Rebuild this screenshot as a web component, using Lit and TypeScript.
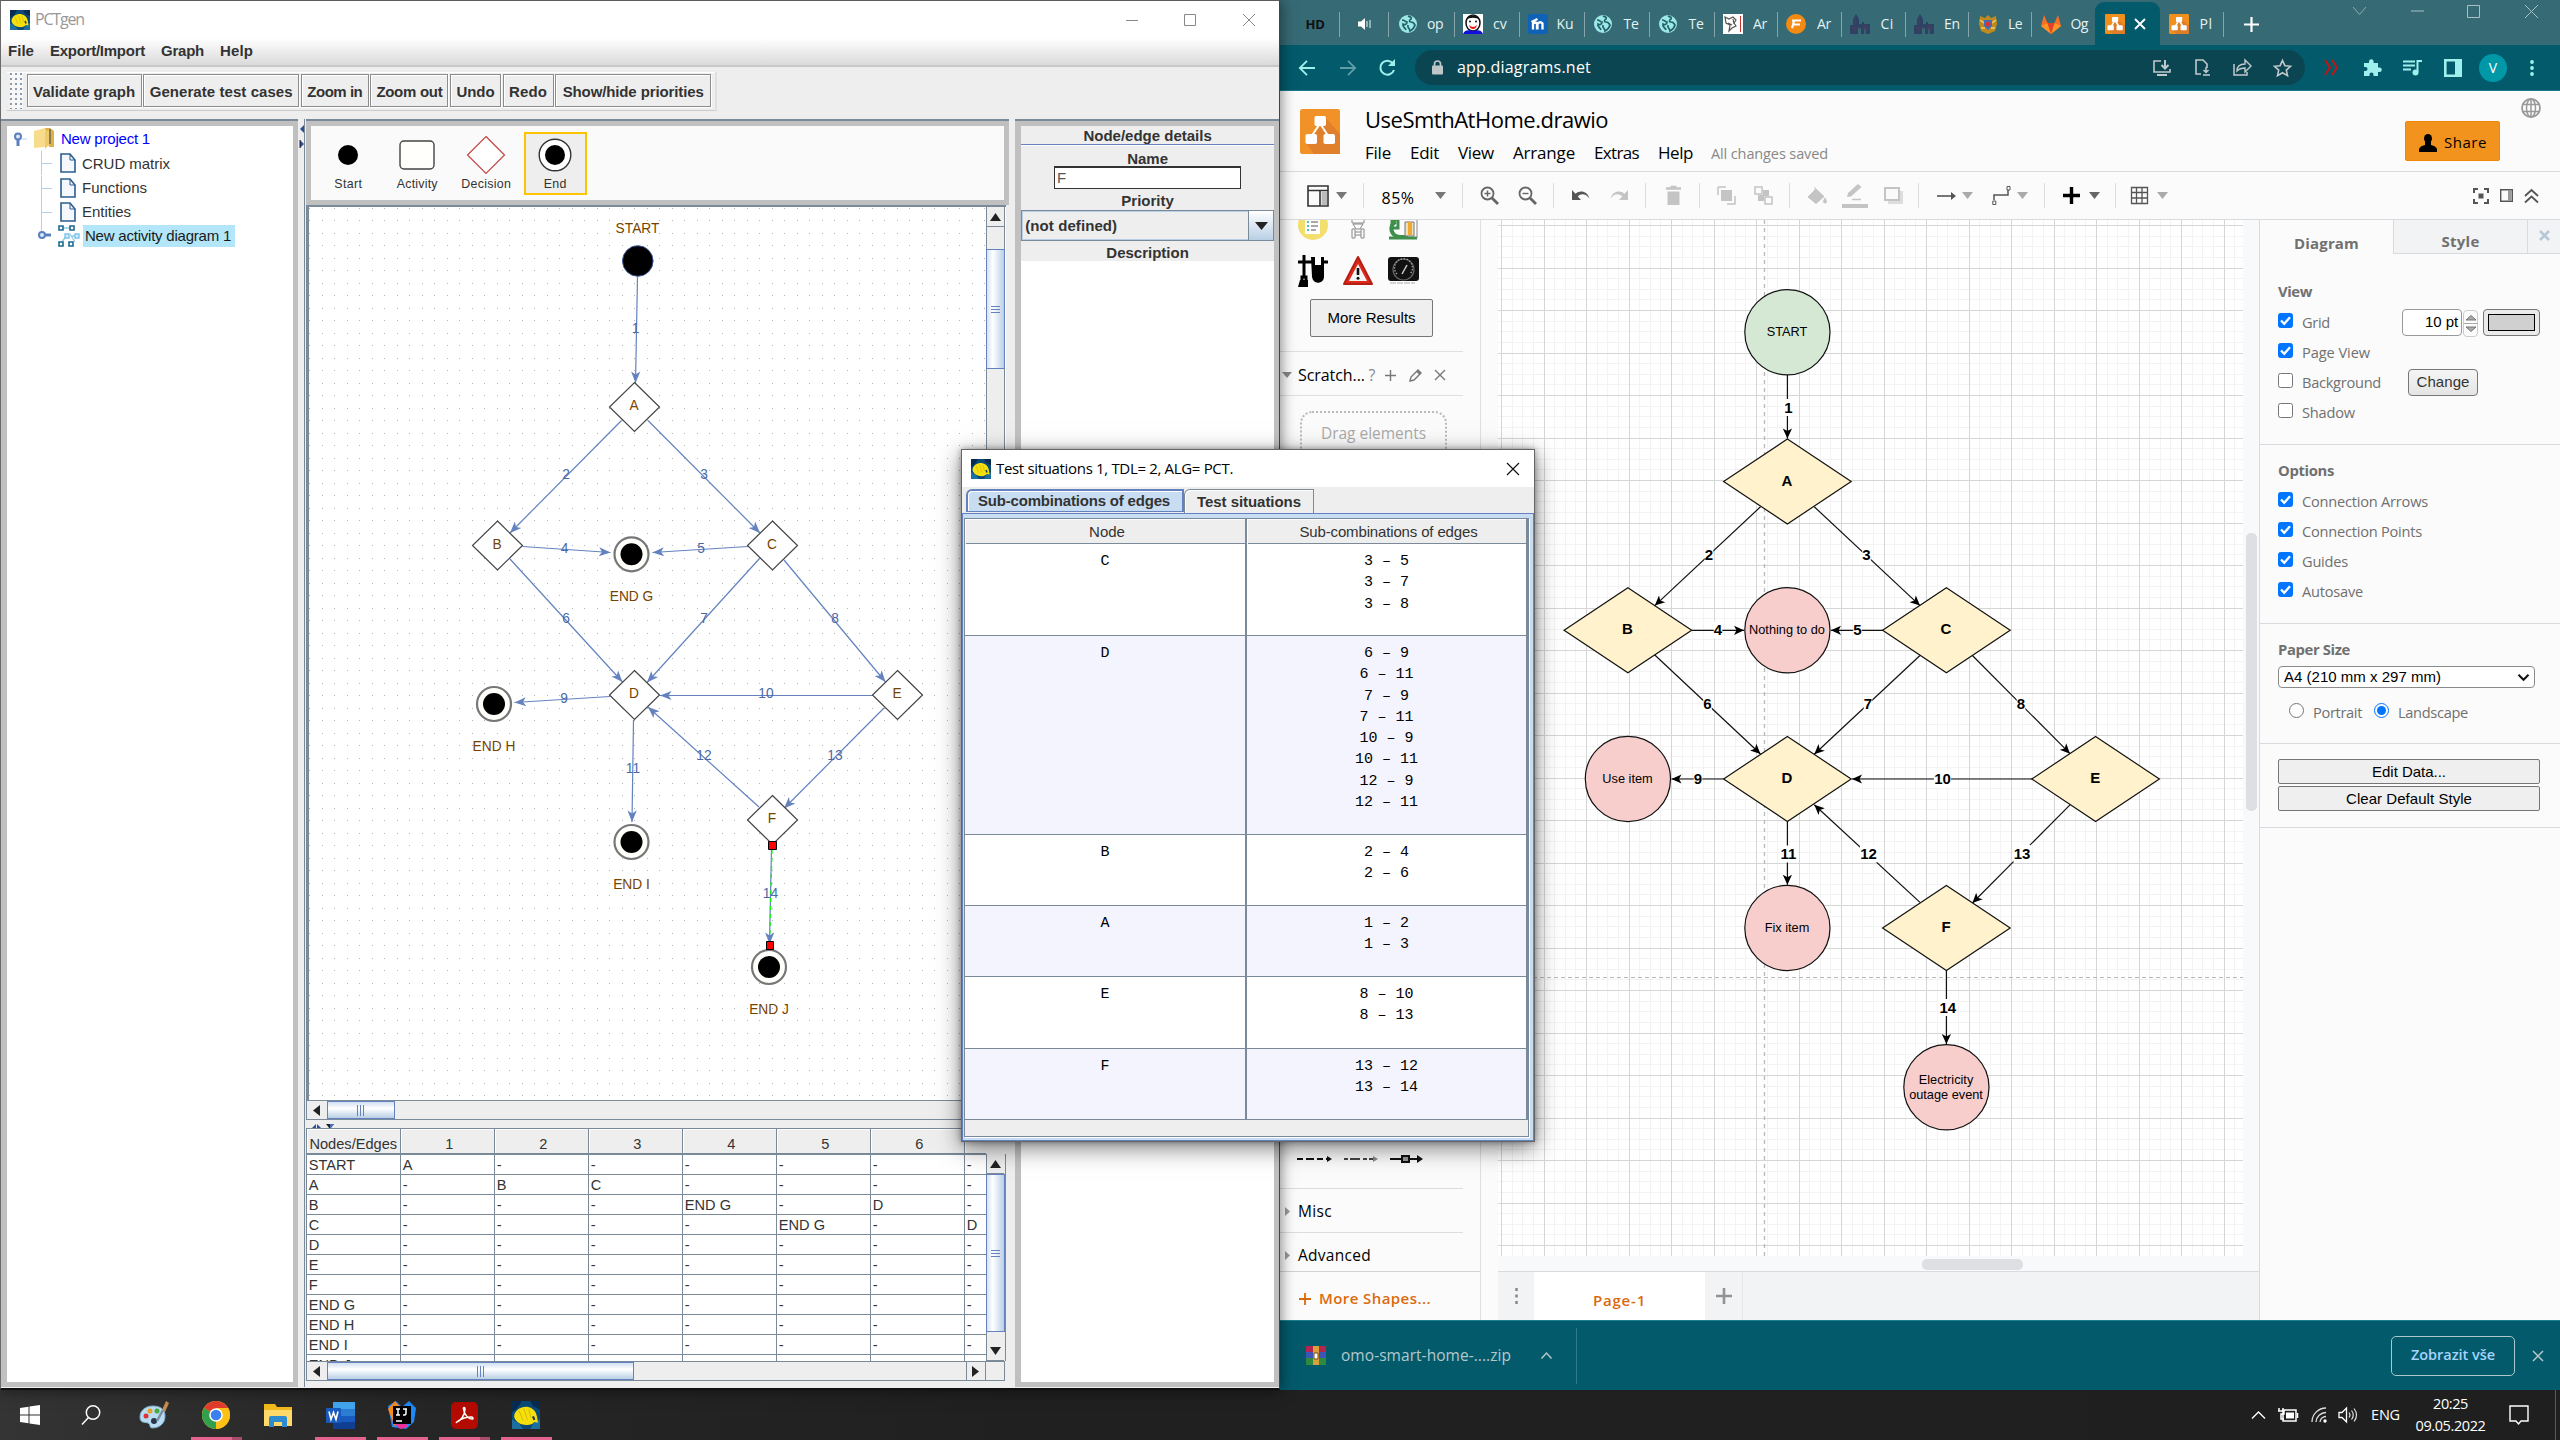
import { LitElement, html, svg, css, nothing } from "lit";
import { customElement, property } from "lit/decorators.js";

const base = css`
  :host { display: block; box-sizing: border-box; }
  * { box-sizing: border-box; }
  svg { display: block; flex: none; overflow: visible; }
  .row { display: flex; align-items: center; }
  .col { display: flex; flex-direction: column; }
  .grow { flex: 1; min-width: 0; min-height: 0; }
`;

/* A one-line label set to a fixed measure by tracking. */
@customElement("text-run")
export class TextRun extends LitElement {
  @property({ type: Number }) w = 0;
  static styles = css`
    :host { display: inline-block; white-space: pre; line-height: 1.3; flex: none; }
    .run { display: inline-block; white-space: pre; }
  `;
  render() {
    return html`<span class="run"><slot></slot></span>`;
  }
  firstUpdated() {
    const run = this.renderRoot.querySelector(".run") as HTMLElement;
    const count = (this.textContent ?? "").length;
    if (this.w && count) {
      const natural = run.getBoundingClientRect().width;
      run.style.letterSpacing = (this.w - natural) / count + "px";
    }
  }
}

const run = (text: string, w = 0) => html`<text-run .w=${w}>${text}</text-run>`;

type Item = [center: number, width: number, content: unknown];

/* Lays items out in a row, each centred on its own stop. */
const strip = (start: number, items: Item[]) => {
  let end = start;
  return items.map(([c, w, content]) => {
    const gap = c - w / 2 - end;
    end = c + w / 2;
    return html`<span class="stop" style="width:${w}px;margin-left:${gap}px">${content}</span>`;
  });
};

const icon = (w: number, h: number, content: unknown, box = `0 0 ${w} ${h}`) =>
  html`<svg width=${w} height=${h} viewBox=${box} fill="none">${content}</svg>`;

const fish = (s: number) =>
  icon(s, s, svg`
    <rect width="20" height="20" fill="#0b4a78"/>
    <path d="M0 0h7l-3 5-4 3zM13 0h7v6l-5-2z" fill="#072c52"/>
    <path d="M0 13l5 3 3 4H0zM16 15l4-2v7h-7z" fill="#1c6f9e"/>
    <path d="M1.500 11C2 6 7 3.500 11.500 4.200c4 .8 6 3.800 6.500 7.800l.5 3.500-2.500-.5c-1 1.500-4 2.500-7 2C5 16.500 2 14 1.500 11z" fill="#f5e00c"/>
    <path d="M5 7l3 7M8.500 5.500l2.500 8M12 6l1.500 6" stroke="#d2b808" stroke-width=".7"/>
    <path d="M15 11l1 2.500" stroke="#24345a" stroke-width="1.500"/>`, "0 0 20 20");

const arrowHead = (x1: number, y1: number, x2: number, y2: number, len: number, half: number, notch: number) => {
  const a = Math.atan2(y2 - y1, x2 - x1);
  const p = (d: number, s: number) =>
    `${(x2 - d * Math.cos(a) - s * Math.sin(a)).toFixed(2)} ${(y2 - d * Math.sin(a) + s * Math.cos(a)).toFixed(2)}`;
  return `M${p(0, 0)}L${p(len, half)}L${p(notch, 0)}L${p(len, -half)}Z`;
};

type Edge = [string, number, number, number, number, number, number];

const activityEdges: Edge[] = [
  ["1", 637.5, 277, 635.5, 383, 635.5, 328],
  ["2", 621.5, 420.5, 510, 533, 566, 474],
  ["3", 648, 420.5, 760, 533, 704, 474],
  ["4", 522.5, 546.5, 610.5, 552.5, 564.5, 548],
  ["5", 748, 546.5, 652.5, 552.5, 701, 548],
  ["6", 510, 559, 622.5, 682, 566, 618],
  ["7", 759.5, 558.5, 647, 682.5, 704, 618],
  ["8", 784, 560, 885.5, 682, 835, 618],
  ["9", 610, 696.5, 514.5, 702.5, 564, 698],
  ["10", 873, 695.5, 660, 695.5, 766, 693],
  ["11", 633.5, 720, 632, 822, 633, 768],
  ["12", 759, 807, 648, 707, 704, 755],
  ["13", 884, 708, 784, 808.5, 835, 755],
  ["14", 771.5, 848, 769.5, 944, 770.5, 893],
];

const diamonds: [string, number, number][] = [
  ["A", 634.5, 407], ["B", 497.5, 545.5], ["C", 772.5, 545.5],
  ["D", 634.5, 695], ["E", 897.5, 695], ["F", 772.5, 820],
];

const ends: [string, number, number, number][] = [
  ["END G", 631.5, 554.3, 596], ["END H", 494, 704, 746],
  ["END I", 631.5, 842, 884], ["END J", 769, 967, 1009],
];

const dotGrid = () => {
  let d = "";
  for (let j = 0; j < 72; j++)
    for (let i = 0; i < 55; i++) {
      const x = Math.round(309.4 + i * 12.5), y = Math.round(207.6 + j * 12.5);
      if (x < 986) d += `M${x} ${y + 0.5}h1`;
    }
  return d;
};

const columns = ["1", "2", "3", "4", "5", "6"];
const matrix: [string, Record<number, string>][] = [
  ["START", { 0: "A" }], ["A", { 1: "B", 2: "C" }], ["B", { 3: "END G", 5: "D" }],
  ["C", { 4: "END G", 6: "D" }], ["D", {}], ["E", {}], ["F", {}],
  ["END G", {}], ["END H", {}], ["END I", {}], ["END J", {}],
];

const tri = {
  up: "M0 8L5.5 0L11 8Z", down: "M0 0L5.5 8L11 0Z",
  left: "M7 0V11L0 5.5Z", right: "M0 0V11L7 5.5Z",
};

@customElement("pct-window")
export class PctWindow extends LitElement {
  static styles = [base, css`
    :host {
      width: 1280px; height: 1390px; background: #eee; color: #333; font: 15px "Liberation Sans", sans-serif;
      border-top: 1px solid #5c5c5c; border-left: 1px solid #6a6a6a; border-right: 1px solid #444;
      border-bottom: 2px solid #111; box-shadow: 0 0 14px rgba(0,0,0,.55); overflow: hidden;
    }
    .wrap { height: 1387px; }
    .stop { display: flex; justify-content: center; flex: none; }
    .title { height: 37px; background: #fff; color: #999; font: 16px "Open Sans", sans-serif; padding-left: 9px; gap: 5px; }
    .menu { height: 29px; background: linear-gradient(#fff, #dadada); border-bottom: 2px solid #c8c8c8; padding: 0 0 1px 7px; gap: 16px; font-weight: bold; }
    .tools { height: 52px; padding: 5px 0 0 6px; }
    .bar { width: 710px; height: 39px; border-bottom: 1px solid #ccc; border-right: 2px solid #e0e0e0; box-shadow: inset 0 1px #fff; padding-left: 3px; gap: 1.6px; font-weight: bold; }
    .grip { width: 13px; height: 36px; margin-right: 2px; background: radial-gradient(circle at 1px 1px, #8a9bb0 0.9px, transparent 1px) 0 0/5px 5px #f7f7f7; }
    .btn { height: 33px; border: 1px solid #8c8c8c; box-shadow: inset 1px 1px #fff, 1px 1px #fff; display: flex; align-items: center; justify-content: center; padding-top: 2px; margin-bottom: 1px; }
    .main { display: flex; height: 1268px; align-items: stretch; }
    .tree { width: 297px; background: #fff; border: 5px solid #c0c0c0; border-left-width: 6px; box-shadow: 0 -2px #7a8a99; margin-top: 2px; padding-top: 1px; }
    .node { display: flex; align-items: center; height: 24.3px; }
    .node.last { height: 23.500px; }
    .link { color: #00f; margin-left: 7px; }
    .leaf { margin-left: 6px; }
    .picked { background: #b3e6f8; height: 22px; width: 152px; padding-left: 2px; margin-left: 3px; display: flex; align-items: center; color: #1a1a1a; }
    .split { width: 7px; padding: 6px 0 0 2px; background: #eee; border-right: 1px solid #7a8a99; }
    .center { width: 704px; margin-left: 1px; }
    .palette { height: 86px; background: #fafafa; border: 5px solid #c0c0c0; border-top-width: 7px; border-image: linear-gradient(#7a8a99 2px, #c0c0c0 2px) 7 5 5 5; display: flex; align-items: flex-start; padding: 6px 0 0 6px; font-size: 12.4px; }
    .tool { width: 63px; height: 63px; margin-right: 6px; display: flex; flex-direction: column; align-items: center; border: 2px solid transparent; }
    .tool .pic { height: 42px; display: flex; align-items: center; }
    .tool.on { border-color: #ffc400; background: #eee; }
    .board { display: flex; height: 895px; border-top: 2px solid #7a8a99; border-left: 3px solid #7a8a99; background: #fff; width: 700px; }
    .vbar { width: 19px; background: #eee; border-left: 1px solid #7a8a99; border-right: 1px solid #7a8a99; display: flex; flex-direction: column; align-items: center; }
    .hbar { height: 20px; background: #eee; border: 1px solid #7a8a99; display: flex; }
    .cap { background: #eee; display: flex; align-items: center; justify-content: center; flex: none; }
    .vbar .cap { width: 17px; height: 20px; border-bottom: 1px solid #7a8a99; }
    .hbar .cap { width: 20px; }
    .hbar .cap.last { width: 19px; border-left: 1px solid #7a8a99; }
    .vthumb { width: 19px; border: 1px solid #6382bf; background: linear-gradient(90deg, #d5e3f2, #fff 35%, #b8cfe5); display: flex; align-items: center; justify-content: center; flex: none; }
    .hthumb { border: 1px solid #6382bf; background: linear-gradient(#d0dff0, #fff 40%, #b8cfe5); display: flex; align-items: center; justify-content: center; flex: none; }
    .hsplit { height: 9px; padding: 4px 0 0 6px; border-bottom: 1px solid #7a8a99; background: #eee; overflow: hidden; }
    .lower { display: flex; height: 232px; }
    .table { width: 680px; overflow: hidden; border-left: 1px solid #7a8a99; background: #fff; }
    .tr { display: grid; grid-template-columns: repeat(8, 94px); height: 20px; }
    .tr > span { border-right: 1px solid #7a8a99; border-bottom: 1px solid #7a8a99; padding: 1px 0 0 2px; line-height: 18px; overflow: hidden; white-space: nowrap; font-size: 14.6px; }
    .tr.head { height: 26px; }
    .tr.head > span { background: #eee; text-align: center; line-height: 30px; padding: 0 0 0 4px; border-bottom-width: 2px; box-shadow: inset 1px 1px #fff; }
    .vbar.low { width: 20px; margin-top: 25px; height: 207px; }
    .details { width: 264px; margin-left: 6px; border: 5px solid #c0c0c0; border-left: 6px solid #c0c0c0; border-top-width: 7px; border-image: linear-gradient(#7a8a99 2px, #c0c0c0 2px) 7 5 5 6; background: #fff; font-weight: bold; text-align: center; }
    .details .bg { background: #eee; }
    .field { width: 187px; height: 23px; margin: 0 auto; background: #fff; border: 1px solid #333; border-top-width: 2px; text-align: left; font-weight: normal; padding-left: 2px; line-height: 20px; color: #555; }
    .combo { height: 31px; border: 1px solid #7a8a99; box-shadow: inset 0 0 0 1px #b8cfe5; display: flex; align-items: center; text-align: left; padding-left: 3px; }
    .combo .drop { width: 25px; height: 29px; border-left: 1px solid #7a8a99; background: linear-gradient(#fff, #b8cfe5); display: flex; align-items: center; justify-content: center; }
    svg text { font: 13.75px "Liberation Sans", sans-serif; text-anchor: middle; }
  `];

  private splitArrows() {
    return icon(4, 24, svg`<path d="M4 0L0 4L4 8Z" fill="#2f4f93"/><path d="M0 15l4 4l-4 4z" fill="#2f4f93"/><path d="M0 15v8" stroke="#222"/>`);
  }

  private board() {
    return html`<svg width="677" height="893" viewBox="309 207 677 893" fill="none">
      <path d=${dotGrid()} stroke="#b4b4b4"/>
      ${activityEdges.map(([, x1, y1, x2, y2]) => svg`
        <path d="M${x1} ${y1}L${x2} ${y2}" stroke="#6382bf" stroke-width="1.2"/>
        <path d=${arrowHead(x1, y1, x2, y2, 11.5, 4.6, 8.5)} fill="#6382bf"/>`)}
      <path d="M772 850L769.7 938" stroke="#0f0" stroke-width="1.3" stroke-dasharray="4 4"/>
      ${activityEdges.map(([n, , , , , x, y]) => svg`<text x=${x} y=${y + 5} fill="#4a69a5">${n}</text>`)}
      <text x="637.5" y="233" fill="#774400">START</text>
      <circle cx="637.8" cy="261" r="15.3" fill="#000" stroke="#3c5a9a"/>
      ${diamonds.map(([n, x, y]) => svg`
        <path d="M${x} ${y - 24.5}L${x + 25} ${y}L${x} ${y + 24.5}L${x - 25} ${y}Z" fill="#fff" stroke="#444" stroke-width="1.2"/>
        <text x=${x - 0.5} y=${y + 3} fill="#774400">${n}</text>`)}
      ${ends.map(([n, x, y, ly]) => svg`
        <circle cx=${x} cy=${y} r="17" fill="#fffffb" stroke="#777" stroke-width="2.2"/>
        <circle cx=${x} cy=${y} r="11" fill="#000"/>
        <text x=${x} y=${ly + 5} fill="#774400">${n}</text>`)}
      <path d="M768.5 841.5h8v8h-8zM766.5 941.5h7v8h-7z" fill="#f00" stroke="#000"/>
    </svg>`;
  }

  private branch() {
    return icon(53, 24, svg`<path d="M34.5 0V24M34.5 12.5H45" stroke="#b8cfe5"/>`);
  }
  private leaf(label: string, w: number) {
    return html`<div class="node">${this.branch()}${icon(16, 20, svg`<path d="M1 1h9l5 6v12H1z" fill="#f4f8fc" stroke="#2b5d8f" stroke-width="1.6"/><path d="M10 1v6h5" stroke="#2b5d8f"/>`)}<span class="leaf">${run(label, w)}</span></div>`;
  }

  render() {
    const vgrip = icon(9, 7, svg`<path d="M0 .5h9M0 3.5h9M0 6.5h9" stroke="#6382bf"/>`);
    const hgrip = icon(7, 11, svg`<path d="M.5 0v11M3.5 0v11M6.5 0v11" stroke="#6382bf"/>`);
    const buttons: [string, number, number][] = [
      ["Validate graph", 115, 102], ["Generate test cases", 156, 143], ["Zoom in", 68, 55],
      ["Zoom out", 78, 66], ["Undo", 51, 38], ["Redo", 51, 38], ["Show/hide priorities", 156, 141],
    ];
    return html`<div class="wrap col">
      <div class="title row">${fish(20)}${run("PCTgen", 49)}
        <span class="row">${strip(89, [
          [1132, 12, icon(12, 12, svg`<path d="M0 6.5h12" stroke="#888"/>`)],
          [1190, 12, icon(12, 12, svg`<path d="M.5 .5h11v11H.5z" stroke="#888"/>`)],
          [1249, 12, icon(12, 12, svg`<path d="M0 0l12 12M12 0L0 12" stroke="#888"/>`)],
        ])}</span>
      </div>
      <div class="menu row">${run("File", 26)}${run("Export/Import", 95)}${run("Graph", 43)}${run("Help", 33)}</div>
      <div class="tools"><div class="bar row"><span class="grip"></span>
        ${buttons.map(([t, w, tw]) => html`<span class="btn" style="width:${w}px">${run(t, tw)}</span>`)}
      </div></div>
      <div class="main">
        <div class="tree">
          <div class="node">${icon(27, 24, svg`<path d="M15 12h5" stroke="#b8cfe5"/><circle cx="11" cy="9.5" r="3" fill="#dce8f6" stroke="#5a7fbf" stroke-width="2"/><path d="M11 12v7" stroke="#5a7fbf" stroke-width="3"/>`)}
            ${icon(20, 22, svg`<path d="M0 3l11-3v19L0 20z" fill="#f7dc8c"/><path d="M11 0h5l4 3v16h-5z" fill="#e0b04c"/><path d="M11 3l5-1v14l-5 5z" fill="#f0cb6c"/><path d="M16 1v15" stroke="#8b7a4a" stroke-width="2"/>`)}
            <span class="link">${run("New project 1", 89)}</span></div>
          ${this.leaf("CRUD matrix", 88)}${this.leaf("Functions", 65)}${this.leaf("Entities", 49)}
          <div class="node last">${icon(51, 23, svg`<path d="M34.5 0V10M38 11.500h5" stroke="#b8cfe5"/><circle cx="35" cy="11" r="3" fill="#dce8f6" stroke="#5a7fbf" stroke-width="2"/><path d="M37 11h7" stroke="#5a7fbf" stroke-width="3"/>`)}
            ${icon(22, 22, svg`<path d="M4 3h10M10 9l-7 9M12 9l5 8M14 11h4" stroke="#8ccbe8" stroke-width="1.3"/><path d="M1 1h4v4H1zM12 1h4v4h-4zM1 17h4v4H1zM11 17h4v4h-4z" stroke="#1d6b8f" stroke-width="1.6" fill="#fff"/><path d="M7 9h4v4H7zM17 9h4v4h-4z" stroke="#7cc4ea" stroke-width="1.4" fill="#d8f0fb"/>`)}
            <span class="picked">${run("New activity diagram 1", 146)}</span></div>
        </div>
        <div class="split">${this.splitArrows()}</div>
        <div class="center col">
          <div class="palette">
            <span class="tool">
              <span class="pic">${icon(20, 20, svg`<circle cx="10" cy="10" r="10" fill="#000"/>`)}</span>${run("Start", 28)}</span>
            <span class="tool"><span class="pic">${icon(36, 30, svg`<rect x="1" y="1" width="34" height="28" rx="4" fill="#fffffb" stroke="#444" stroke-width="1.4"/>`)}</span>${run("Activity", 41)}</span>
            <span class="tool"><span class="pic">${icon(38, 38, svg`<path d="M19 .5L37.5 19L19 37.5L.5 19Z" fill="#fff" stroke="#c24545" stroke-width="1.2"/>`)}</span>${run("Decision", 50)}</span>
            <span class="tool on"><span class="pic">${icon(34, 34, svg`<circle cx="17" cy="17" r="15.8" fill="#fff" stroke="#333" stroke-width="1.4"/><circle cx="17" cy="17" r="10" fill="#000"/>`)}</span>${run("End", 23)}</span>
          </div>
          <div class="board">${this.board()}
            <div class="vbar"><span class="cap">${icon(11, 8, svg`<path d=${tri.up} fill="#222"/>`)}</span>
              <span class="vthumb" style="height:120px;margin-top:22px">${vgrip}</span></div>
          </div>
          <div class="hbar"><span class="cap">${icon(7, 11, svg`<path d=${tri.left} fill="#222"/>`)}</span><span class="hthumb" style="width:68px">${hgrip}</span></div>
          <div class="hsplit">${icon(24, 5, svg`<path d="M0 4l4-4v4zM5 0l4 4H5z" fill="#2f4f93"/><path d="M14 0h8l-4 5z" fill="#222"/><path d="M18 0h4l-4 5z" fill="#4b6fbf"/>`)}</div>
          <div class="lower">
            <div class="table">
              <div class="tr head"><span style="padding:0">Nodes/Edges</span>${columns.map((c) => html`<span>${c}</span>`)}<span></span></div>
              ${matrix.map(([name, cells]) => html`<div class="tr"><span>${name}</span>${[0, 1, 2, 3, 4, 5, 6].map((i) => html`<span>${cells[i] ?? "-"}</span>`)}</div>`)}
            </div>
            <div class="vbar low"><span class="cap">${icon(11, 8, svg`<path d=${tri.up} fill="#222"/>`)}</span>
              <span class="vthumb" style="height:158px">${vgrip}</span>
              <span class="grow"></span>
              <span class="cap">${icon(11, 8, svg`<path d=${tri.down} fill="#222"/>`)}</span></div>
          </div>
          <div class="hbar" style="width:699px"><span class="cap">${icon(7, 11, svg`<path d=${tri.left} fill="#222"/>`)}</span><span class="hthumb" style="width:307px">${hgrip}</span><span class="grow"></span><span class="cap last">${icon(7, 11, svg`<path d=${tri.right} fill="#222"/>`)}</span><span style="width:19px;border-left:1px solid #7a8a99"></span></div>
        </div>
        <div class="details">
          <div class="bg col">
            <div style="height:19px;line-height:20px;border-bottom:1px solid #6382bf">Node/edge details</div>
            <div style="height:21px;line-height:25px;border-top:1px solid #fff">Name</div>
            <div class="field">F</div>
            <div style="height:21px;line-height:23px">Priority</div>
            <div class="combo"><span class="grow">${run("(not defined)", 92)}</span><span class="drop">${icon(13, 8, svg`<path d="M0 0h13L6.5 8z" fill="#222"/>`)}</span></div>
            <div style="height:20px;line-height:24px">Description</div>
          </div>
        </div>
      </div>
    </div>`;
  }
}

const situations: [string, string[]][] = [
  ["C", ["3 – 5", "3 – 7", "3 – 8"]],
  ["D", ["6 – 9", "6 – 11", "7 – 9", "7 – 11", "10 – 9", "10 – 11", "12 – 9", "12 – 11"]],
  ["B", ["2 – 4", "2 – 6"]],
  ["A", ["1 – 2", "1 – 3"]],
  ["E", ["8 – 10", "8 – 13"]],
  ["F", ["13 – 12", "13 – 14"]],
];

@customElement("situations-dialog")
export class SituationsDialog extends LitElement {
  static styles = [base, css`
    :host { width: 574px; height: 693px; border: 1px solid #666; background: #eee; color: #333; font: 15px "Liberation Sans", sans-serif; box-shadow: 0 6px 22px rgba(0,0,0,.5), 0 0 6px rgba(0,0,0,.35); }
    .title { height: 37px; background: #fff; color: #000; font: 15px "Open Sans", sans-serif; padding: 0 15px 0 9px; gap: 5px; }
    .tabs { display: flex; height: 26px; align-items: flex-end; padding-left: 4px; font-weight: bold; }
    .tab { height: 24px; display: flex; align-items: center; justify-content: center; border: 1px solid #7a8a99; border-bottom: 0; border-top-left-radius: 6px; box-shadow: inset 1px 1px #fff; }
    .tab.on { background: #c8ddf2; border: 2px solid #6382bf; border-bottom-width: 1px; height: 23px; margin-bottom: 1px; padding-right: 2px; }
    .body { height: 628px; border: 1px solid #6382bf; background: #c8ddf2; padding: 4px 4px 4px 1px; }
    .sheet { height: 619px; border: 1px solid #7a8a99; background: #eee; box-shadow: 1px 1px #fff; }
    .tr { display: grid; grid-template-columns: 282px 1fr; border-bottom: 1px solid #7a8a99; background: #fff; text-align: center; }
    .tr:nth-child(odd) { background: #f4f4ff; }
    .tr > span { font: 15px/21.25px "Liberation Mono", monospace; color: #000; padding-top: 7px; white-space: pre-line; border-right: 2px solid #7a8a99; }
    .tr.head { height: 25px; background: #eee; }
    .tr.head > span { font: 15px/25px "Liberation Sans", sans-serif; color: #333; padding: 0 0 0 4px; box-shadow: inset 1px 1px #fff; }
  `];
  render() {
    const heights = [92, 199, 71, 71, 72, 71];
    return html`
      <div class="title row">${fish(20)}${run("Test situations 1, TDL= 2, ALG= PCT.", 237)}<span class="grow"></span>
        ${icon(12, 12, svg`<path d="M0 0l12 12M12 0L0 12" stroke="#111" stroke-width="1.2"/>`)}</div>
      <div class="tabs"><span class="tab on" style="width:218px">${run("Sub-combinations of edges", 192)}</span><span class="tab" style="width:130px">${run("Test situations", 104)}</span></div>
      <div class="body"><div class="sheet">
        <div class="tr head"><span>Node</span><span>${run("Sub-combinations of edges", 178)}</span></div>
        ${situations.map(([n, lines], i) => html`<div class="tr" style="height:${heights[i]}px"><span>${n}</span><span>${lines.join("\n")}</span></div>`)}
      </div></div>`;
  }
}

/* drawio diagram */
type Shape = ["circle" | "rhombus", number, number, string, string[]];
const shapes: Shape[] = [
  ["circle", 1787.4, 332.3, "#d5e8d4", ["START"]],
  ["rhombus", 1787.4, 481.5, "#fff2cc", ["A"]],
  ["rhombus", 1627.9, 630.3, "#fff2cc", ["B"]],
  ["circle", 1787.4, 630.3, "#f8cecc", ["Nothing to do"]],
  ["rhombus", 1946.4, 630.3, "#fff2cc", ["C"]],
  ["circle", 1627.9, 779, "#f8cecc", ["Use item"]],
  ["rhombus", 1787.4, 779, "#fff2cc", ["D"]],
  ["rhombus", 2095.6, 779, "#fff2cc", ["E"]],
  ["circle", 1787.4, 928, "#f8cecc", ["Fix item"]],
  ["rhombus", 1946.4, 928, "#fff2cc", ["F"]],
  ["circle", 1946.4, 1087.2, "#f8cecc", ["Electricity", "outage event"]],
];
const flowEdges: Edge[] = [
  ["1", 1787.4, 375, 1787.4, 438.5, 1788.4, 407.5],
  ["2", 1760.5, 506.8, 1654.8, 605.6, 1709, 555],
  ["3", 1814.3, 506.8, 1920, 605.6, 1866.5, 555],
  ["4", 1692, 630.3, 1744, 630.3, 1718, 630],
  ["5", 1883, 630.3, 1831, 630.3, 1857.5, 630],
  ["6", 1654.8, 655, 1760.5, 754, 1707.5, 704],
  ["7", 1920, 655.5, 1814.3, 754.3, 1868, 704],
  ["8", 1972.4, 655.5, 2070, 753.7, 2021, 704],
  ["9", 1723.5, 779, 1671.5, 779, 1698, 779],
  ["10", 2032, 779, 1852, 779, 1942.5, 779],
  ["11", 1787.4, 821.5, 1787.4, 884.8, 1788.4, 854],
  ["12", 1920, 902.4, 1814.3, 804.8, 1868.5, 854],
  ["13", 2070, 804.8, 1972.4, 903, 2022, 853.5],
  ["14", 1946.4, 970.5, 1946.4, 1044, 1947.8, 1007.5],
];
const gridLines = (major: boolean) => {
  let d = "";
  for (let i = -1; i < 98; i++) {
    if ((((i % 4) + 4) % 4 === 0) !== major) continue;
    const x = Math.floor(1501.5 + i * 10.625), y = Math.floor(225.5 + i * 10.625);
    if (x > 1498 && x < 2243) d += `M${x + 0.5} 220V1256`;
    if (y > 219 && y < 1256) d += `M1498 ${y + 0.5}H2243`;
  }
  return d;
};

const drawioLogo = (w: number, h: number) => icon(w, h, svg`
  <rect width="40" height="40" rx="2.5" fill="#f08f1c"/>
  <path d="M24 8L40 24V40H15L7 31L20 14Z" fill="#df7d28"/>
  <path d="M19 14L11 27M21 14L29 27" stroke="#fff" stroke-width="3"/>
  <rect x="14" y="6" width="12.500" height="10" rx="1.500" fill="#fff"/>
  <rect x="5" y="22.500" width="12.500" height="10" rx="1.500" fill="#fff"/>
  <rect x="23" y="22.500" width="12.500" height="10" rx="1.500" fill="#fff"/>`, "0 0 40 40");

const globe = () => icon(18, 18, svg`<circle cx="9" cy="9" r="9" fill="#9be8e4"/><path d="M3 5c3 0 3 2 5 2 0 3-3 3-4 2-1 3 2 3 3 6M9 1c2 1 4 1 3 3-2 1-2 3 0 3 3 0 3 2 4 3-1 4-3 5-5 6 0-3-3-3-2-6" stroke="#24616e" stroke-width="1.700"/>`);
const castle = () => icon(20, 20, svg`<path d="M0 20v-9h3V5l3-5 3 5v5h3V8h2v2h6v10h-4v-5h-2v5h-3v-6H8v6z" fill="#2f4263"/><path d="M1 14h18M5 4v14M15 10v9" stroke="#4e3f66" stroke-width=".8"/>`);

const caret = (c: string) => icon(11, 7, svg`<path d="M0 0h11L5.500 7z" fill=${c}/>`);
const sep = html`<i class="sep"></i>`;

@customElement("drawio-window")
export class DrawioWindow extends LitElement {
  static styles = [base, css`
    :host { width: 1281px; height: 1390px; background: #fbfbfb; font: 15px "Open Sans", sans-serif; color: #000; overflow: hidden; }
    .stop { display: flex; align-items: center; justify-content: center; flex: none; }
    .tabstrip { height: 45px; background: #366a74; color: #e6f2f3; font-size: 14px; align-items: stretch; }
    .tabstrip .stop { height: 48px; }
    .tsep { width: 1px; height: 25px; background: #86a5ab; }
    .active { width: 65px; height: 43px; margin-top: 2px; background: #035a6b; border-radius: 9px 9px 0 0; display: flex; align-items: center; padding-left: 10px; gap: 10px; flex: none; }
    .nav { height: 46px; background: #035a6b; border-bottom: 1px solid #1b7a8a; }
    .omni { width: 890px; height: 35px; border-radius: 18px; background: #0c4552; display: flex; align-items: center; color: #fff; font-size: 16px; padding-left: 17px; }
    .avatar { width: 28px; height: 28px; border-radius: 50%; background: #0097a7; color: #fff; display: flex; align-items: center; justify-content: center; font-size: 14px; }
    .head { height: 81px; border-bottom: 1px solid #d8dadd; display: flex; align-items: flex-start; }
    .logo { padding: 18px 0 0 21px; flex: none; }
    .names { padding: 9px 0 0 25px; width: 760px; flex: none; }
    .doc { font-size: 22px; line-height: 30px; height: 38px; display: flex; align-items: center; }
    .menus { height: 31px; display: flex; align-items: center; gap: 19px; font-size: 17px; }
    .saved { color: #888; font-size: 14.5px; margin-left: -1px; }
    .share { width: 95px; height: 40px; background: #f2931e; border: 1px solid #f08705; border-radius: 2px; margin: 30px 0 0 305px; display: flex; align-items: center; padding: 3px 0 0 13px; gap: 7px; font-size: 15px; flex: none; }
    .world { padding: 7px 0 0 21px; }
    .tools { height: 48px; border-bottom: 1px solid #d8dadd; }
    .sep { display: block; width: 1px; height: 25px; background: #dcdcdc; }
    .work { display: flex; height: 1100px; }
    .side { width: 202px; border-right: 1px solid #e0e0e0; height: 1100px; display: flex; flex-direction: column; overflow: hidden; }
    .finds { padding: 0 0 0 19px; display: grid; grid-template-columns: repeat(3, 45px); height: 79px; overflow: hidden; }
    .more { width: 123px; height: 38px; margin-left: 31px; background: #efefef; border: 1px solid #767676; border-radius: 2px; font: 15px "Liberation Sans", sans-serif; display: flex; align-items: center; justify-content: center; flex: none; }
    .scratch { width: 184px; height: 45px; margin-top: 14px; border-top: 1px solid #e0e0e0; border-bottom: 1px solid #e0e0e0; display: flex; align-items: center; font-size: 16px; padding: 3px 0 0 0; flex: none; }
    .drag { width: 147px; height: 100px; margin: 15px 0 0 21px; border: 2px dotted #bbb; border-radius: 12px; display: flex; justify-content: center; padding-top: 10px; color: #aaa; font-size: 15.500px; flex: none; }
    .lines { margin: auto 0 0 18px; padding-bottom: 25px; display: flex; gap: 11px; }
    .sect { width: 184px; height: 44px; border-top: 1px solid #ddd; display: flex; align-items: center; font-size: 15.500px; padding: 2px 0 0 6px; gap: 8px; flex: none; }
    .sect.tight { height: 39px; padding-top: 7px; }
    .shapes { height: 49px; border-top: 1px solid #d0d3d6; display: flex; align-items: center; color: #db6a0c; font-weight: 600; font-size: 15px; padding: 5px 0 0 20px; gap: 8px; flex: none; }
    .stage { margin-left: 17px; width: 761px; background: #f8f9fa; flex: none; }
    .stage svg text { font-family: "Liberation Sans", sans-serif; text-anchor: middle; fill: #000; }
    .scene { display: flex; height: 1036px; }
    .vtrack { width: 16px; padding: 313px 0 0 3px; }
    .vtrack i { display: block; width: 11px; height: 278px; border-radius: 5px; background: #dddfe2; }
    .htrack { height: 15px; padding: 3px 0 0 424px; }
    .htrack i { display: block; width: 101px; height: 11px; border-radius: 5px; background: #dddfe2; }
    .pages { height: 49px; background: #f1f3f4; border-top: 1px solid #d8dadd; display: flex; align-items: center; }
    .page { width: 171px; height: 48px; background: #fff; display: flex; align-items: center; justify-content: center; color: #db6a0c; font-weight: 600; padding-top: 10px; }
    .fmt { width: 301px; border-left: 1px solid #d8dadd; color: #707070; font-size: 14.600px; flex: none; }
    .ftabs { display: flex; height: 34px; font-weight: bold; font-size: 15px; }
    .ftab { display: flex; align-items: center; justify-content: center; flex: none; }
    .ftab.off { background: #f1f3f4; border-left: 1px solid #d8dadd; border-bottom: 1px solid #d8dadd; }
    .blk { border-bottom: 1px solid #d8dadd; padding-left: 18px; }
    .ttl { font-weight: bold; font-size: 14.800px; display: flex; align-items: center; height: 30px; }
    .opt { display: flex; align-items: center; height: 30px; gap: 9px; }
    .box { width: 15px; height: 15px; border-radius: 2.500px; border: 1px solid #767676; background: #fff; flex: none; margin-top: -4px; display: flex; align-items: center; justify-content: center; }
    .box.on { background: #0075ff; border-color: #0075ff; }
    .num { width: 60px; height: 27px; border: 1px solid #999; border-radius: 4px; background: #fff; color: #000; font: 15px "Liberation Sans", sans-serif; display: flex; align-items: center; justify-content: flex-end; padding-right: 3px; }
    .spin { width: 15px; height: 27px; border: 1px solid #ccc; border-radius: 4px; display: flex; align-items: center; justify-content: center; margin: 2px 0 0 1px; }
    .swatch { width: 57px; height: 27px; margin-left: 5px; border: 1px solid #777; border-radius: 4px; background: #eaeaea; padding: 4px; }
    .swatch i { display: block; height: 17px; border: 1px solid #000; background: #d0d0d0; }
    .change { width: 70px; height: 27px; border: 1px solid #777; border-radius: 4px; background: linear-gradient(#f5f5f5, #e4e4e4); color: #333; font: 15px "Liberation Sans", sans-serif; display: flex; align-items: center; justify-content: center; }
    .right { margin-left: auto; display: flex; align-items: center; }
    .select { width: 257px; height: 22px; margin-top: 1px; border: 1px solid #8a8a8a; border-radius: 4px; background: #fff; color: #000; font: 15px "Liberation Sans", sans-serif; display: flex; align-items: center; justify-content: space-between; padding: 0 5px; }
    .radio { width: 15px; height: 15px; border-radius: 50%; border: 1px solid #767676; background: #fff; margin-top: -5px; display: flex; align-items: center; justify-content: center; }
    .radio.on { border-color: #0075ff; }
    .radio.on i { width: 9px; height: 9px; border-radius: 50%; background: #0075ff; }
    .wide { width: 262px; height: 25px; margin-bottom: 2px; border: 1px solid #767676; border-radius: 2px; background: #efefef; color: #000; font: 15px "Liberation Sans", sans-serif; display: flex; align-items: center; justify-content: center; }
    .dl { height: 70px; background: #035a6b; border-top: 1px solid #1b8090; color: #b4c8cb; font-size: 15.500px; }
    .all { width: 124px; height: 40px; border: 1px solid #a9c7cc; border-radius: 5px; display: flex; align-items: center; justify-content: center; color: #a4d4fb; font-weight: 600; font-size: 14.500px; }
    .q { color: #8a8a8a; }
  `];

  private tabs() {
    const pair = (text: string, w = 15) => run(text, w);
    const bar = html`<i class="tsep"></i>`;
    const lead: Item[] = [
      [1315, 22, html`<b style="color:#111;font-size:13px">${run("HD", 19)}</b>`],
      [1339.5, 1, bar],
      [1364, 14, icon(13, 12, svg`<path d="M0 3.500h3L7 0v12L3 8.500H0z" fill="#fff"/><path d="M9 3v6M12 2v8" stroke="#cfe3e6" stroke-width="1.200"/>`)],
      [1388.5, 1, bar],
      [1408, 18, globe()], [1435, 18, pair("op", 16)], [1454, 1, bar],
      [1473, 20, icon(20, 20, svg`<rect width="20" height="20" fill="#fff"/><ellipse cx="10" cy="9" rx="7" ry="8" stroke="#111" stroke-width="1.500"/><path d="M3 6c1-5 12-6 14 0-4-3-10-3-14 0z" fill="#111"/><circle cx="7" cy="7.500" r="1" fill="#111"/><circle cx="13" cy="7.500" r="1" fill="#111"/><path d="M6 11q4 4 8 0q-1 4-4 4t-4-4z" fill="#e11"/><path d="M0 20c2-5 6-4 10-3 4-1 8-2 10 3z" fill="#11d"/>`)],
      [1500, 18, pair("cv", 14)], [1519, 1, bar],
      [1538, 20, icon(20, 20, svg`<rect width="20" height="20" rx="2" fill="#0f62b8"/><path d="M5 15.500V9.500q2-2 4 0V15.500M9.500 15.500V9.500q3-2.500 5 0V15.500M3.500 8l6-3" stroke="#fff" stroke-width="2.300"/>`)],
      [1565, 18, pair("Ku", 17)], [1584, 1, bar],
      [1603, 18, globe()], [1631, 18, pair("Te")], [1649, 1, bar],
      [1668, 18, globe()], [1696, 18, pair("Te")], [1714, 1, bar],
      [1733, 20, icon(20, 20, svg`<rect width="20" height="20" fill="#fff"/><path d="M2 3l4 2 4-2 3 3-2 3 2 3-4 2-3 3 1-6-4-2zM5 9l4 2M10 5l1 5" stroke="#555" stroke-width="1.200"/><path d="M17.500 2v16" stroke="#c33" stroke-width="1"/>`)],
      [1760, 18, pair("Ar", 14)], [1777, 1, bar],
      [1796, 20, icon(20, 20, svg`<circle cx="10" cy="10" r="10" fill="#f38a13"/><path d="M6 6.500h9M8 6.500q-1 5-2 7.500M8 10.500h6" stroke="#fff" stroke-width="2.200"/>`)],
      [1824, 18, pair("Ar", 14)], [1841, 1, bar],
      [1860, 20, castle()], [1887, 18, pair("Ci", 13)], [1905, 1, bar],
      [1924, 20, castle()], [1952, 18, pair("En", 16)], [1968.5, 1, bar],
      [1988, 20, icon(20, 20, svg`<path d="M10 1l3 3 5-2 1 8-2 7-7 3-7-3-2-7 1-8 5 2z" fill="#c08a1e"/><path d="M2 6l4 3M18 6l-4 3M3 14h4M17 14h-4" stroke="#f1d060" stroke-width="1.500"/><path d="M6 6h8v6l-4 4-4-4z" fill="#3b6fc0"/><circle cx="10" cy="10" r="2.500" fill="#d33"/>`)],
      [2015, 18, pair("Le", 14)], [2031.5, 1, bar],
      [2051, 20, icon(20, 19, svg`<path d="M10 19L0 11 3 0l3.500 8h7L17 0l3 11z" fill="#fc6d26"/><path d="M10 19L0 11l6.500-3L10 19l3.500-11L20 11z" fill="#fca326" opacity=".75"/><path d="M10 19L6.500 8h7z" fill="#e24329"/>`)],
      [2079, 18, pair("Og", 17)],
    ];
    const tail: Item[] = [
      [2179, 20, drawioLogo(20, 20)], [2206, 18, pair("Pl", 13)], [2223.5, 1, bar],
      [2251.5, 15, icon(15, 15, svg`<path d="M7.500 0v15M0 7.500h15" stroke="#fff" stroke-width="2.200"/>`)],
    ];
    const win: Item[] = [
      [2359, 14, icon(13, 8, svg`<path d="M0 0l6.500 7.500L13 0" stroke="#8fadb2"/>`)],
      [2417, 14, icon(13, 2, svg`<path d="M0 1h13" stroke="#a9c0c4"/>`)],
      [2473, 14, icon(13, 13, svg`<path d="M.5 .5h12v12H.5z" stroke="#a9c0c4"/>`)],
      [2531, 14, icon(13, 13, svg`<path d="M0 0l13 13M13 0L0 13" stroke="#a9c0c4"/>`)],
    ];
    return html`<div class="tabstrip row">
      ${strip(1279, lead)}<span style="width:7px;flex:none"></span>
      <span class="active">${drawioLogo(20, 20)}${icon(10, 10, svg`<path d="M0 0l10 10M10 0L0 10" stroke="#fff" stroke-width="1.800"/>`)}</span>
      ${strip(2160, tail)}
      <span class="row" style="height:22px">${strip(2259, win)}</span>
    </div>`;
  }

  private nav() {
    const c = "#9ff0ec";
    const g = "#c0cacc";
    const inner: Item[] = [
      [2162, 20, icon(18, 16, svg`<path d="M8 1H1v11h16V9" stroke=${g} stroke-width="1.600"/><path d="M12 0v8M8.500 5l3.500 3.500L15.500 5M4 15h10" stroke=${g} stroke-width="2"/>`)],
      [2202, 20, icon(15, 17, svg`<path d="M6 15H1V1h7l4 4v4" stroke=${g} stroke-width="1.600"/><path d="M11 8v5M8.500 11l2.500 2.500 2.500-2.500M8 16h7" stroke=${g} stroke-width="1.500"/>`)],
      [2242, 20, icon(19, 17, svg`<path d="M1 5v11h13v-3" stroke=${g} stroke-width="1.500"/><path d="M4 12c0-5 3-7 8-7V1l6 6-6 6V9c-4 0-6 1-8 3z" stroke=${g} stroke-width="1.400"/>`)],
      [2282, 20, icon(19, 18, svg`<path d="M9.500 1.500l2.400 5.200 5.600.6-4.200 3.800 1.200 5.500-5-2.900-5 2.900 1.200-5.500L1.500 7.300l5.600-.6z" stroke=${g} stroke-width="1.600"/>`)],
    ];
    return html`<div class="nav row">${strip(1279, [
      [1307, 18, icon(16, 16, svg`<path d="M16 8H1M8 .8L.8 8L8 15.200" stroke=${c} stroke-width="1.800"/>`)],
      [1348, 18, icon(16, 16, svg`<path d="M0 8h15M8 .8L15.200 8L8 15.200" stroke="#5f9ea6" stroke-width="1.800"/>`)],
      [1387.5, 18, icon(17, 17, svg`<path d="M15 11a7 7 0 1 1-1-6.500" stroke=${c} stroke-width="2"/><path d="M16 0v7H9z" fill=${c}/>`)],
      [1860, 890, html`<span class="omni">${icon(11, 15, svg`<rect y="5.500" width="11" height="9" rx="1" fill="#bfc6c8"/><path d="M2.500 6V4a3 3 0 0 1 6 0v2" stroke="#bfc6c8" stroke-width="1.700"/>`)}<span style="width:14px"></span>${run("app.diagrams.net", 134)}${strip(1591, inner)}</span>`],
      [2331, 16, icon(14, 15, svg`<path d="M1 0l5 7.500L1 15M8 0l5 7.500L8 15" stroke="#c41414" stroke-width="2"/>`)],
      [2372.5, 20, icon(19, 19, svg`<path d="M1 5h5V3.500a2.300 2.300 0 0 1 4.600 0V5H15v4.500h1.500a2.300 2.300 0 0 1 0 4.600H15V18H10.500v-1.500a2 2 0 0 0-4 0V18H1v-5h1.500a2 2 0 0 0 0-4H1z" fill=${c}/>`)],
      [2412.5, 20, icon(19, 16, svg`<path d="M0 1.500h12M0 5.500h12M0 9.500h8M14.500 12V1h4.500" stroke=${c} stroke-width="2"/><circle cx="12.500" cy="12.500" r="3" fill=${c}/>`)],
      [2452.5, 20, icon(18, 18, svg`<path d="M1.300 1.300h15.400v15.400H1.300z" stroke=${c} stroke-width="2.600"/><path d="M11 1h6v16h-6z" fill=${c}/>`)],
      [2493, 28, html`<span class="avatar">V</span>`],
      [2532, 6, icon(4, 16, svg`<circle cx="2" cy="2" r="1.900" fill=${c}/><circle cx="2" cy="8" r="1.900" fill=${c}/><circle cx="2" cy="14" r="1.900" fill=${c}/>`)],
    ])}</div>`;
  }

  private tools() {
    const k = "#555", l = "#c4c4c4";
    const mag = (plus: boolean) => icon(19, 19, svg`<circle cx="7.500" cy="7.500" r="6" stroke="#666" stroke-width="1.800"/><path d="M12 12l6 6" stroke="#666" stroke-width="2.800"/><path d="M4.500 7.500h6" stroke="#666" stroke-width="1.400"/>${plus ? svg`<path d="M7.500 4.500v6" stroke="#666" stroke-width="1.400"/>` : nothing}`);
    const items: Item[] = [
      [1318, 22, icon(22, 22, svg`<path d="M1 1h20v20H1zM1 5.500h20M13 5.500V21" stroke="#333" stroke-width="1.600"/><path d="M14.500 6.500h5.500v13.500h-5.500z" fill="#bbb"/>`)],
      [1341.5, 12, caret("#777")], [1363, 1, sep],
      [1398, 34, html`<span style="font-size:16px;padding-top:4px;display:block">${run("85%", 33)}</span>`],
      [1440, 12, caret("#777")], [1462, 1, sep],
      [1489.5, 20, mag(true)], [1527.5, 20, mag(false)], [1553, 1, sep],
      [1580.5, 20, icon(20, 13, svg`<path d="M1 1v10h9L6.800 7.500C10 4 15 4.500 18.500 9.500 16.500 2 9 .5 4.500 4.800z" fill=${k}/>`)],
      [1618.5, 20, icon(20, 13, svg`<path d="M19 1v10h-9l3.200-3.500C10 4 5 4.500 1.500 9.500 3.500 2 11 .5 15.500 4.800z" fill=${l}/>`)],
      [1645, 1, sep],
      [1673, 18, icon(17, 19, svg`<path d="M1 2.500h15M5.500 1h6" stroke=${l} stroke-width="2.600"/><path d="M2.500 5.500h12V19h-12z" fill=${l}/>`)],
      [1699, 1, sep],
      [1726.5, 20, icon(19, 19, svg`<path d="M1 1h8M1 1v8M18 10v8h-8" stroke=${l} stroke-width="1.500"/><path d="M4 4h11v11H4z" fill=${l}/>`)],
      [1763.5, 20, icon(19, 19, svg`<path d="M1 1h7v7H1zM11 11h7v7h-7z" stroke=${l} stroke-width="1.500"/><path d="M9 4h6v6H9zM4 9h6v6H4z" fill=${l}/>`)],
      [1789, 1, sep],
      [1817, 22, icon(20, 20, svg`<path d="M8 1v5M1 11l8-8 8 7.500-8 7z" fill=${l} stroke=${l}/><path d="M18 12q3 5 0 5t0-5z" fill=${l} stroke=${l}/>`)],
      [1854.5, 26, icon(26, 26, svg`<path d="M5 14l1-4 10-9 3.500 3L9 13.500z" fill=${l}/><path d="M10 16.500h9" stroke=${l} stroke-width="1.500"/><path d="M0 23h26" stroke=${l} stroke-width="4"/>`)],
      [1893, 20, icon(19, 17, svg`<path d="M4 4h15v13H4z" fill="#ddd"/><path d="M1 1h14v12H1z" fill="#fafafa" stroke=${l} stroke-width="2"/>`)],
      [1918.5, 1, sep],
      [1946, 20, icon(19, 8, svg`<path d="M0 4h16" stroke=${k} stroke-width="1.600"/><path d="M14 0l5 4-5 4z" fill=${k}/>`)],
      [1967.5, 12, caret("#aaa")],
      [2001, 20, icon(19, 19, svg`<path d="M2 14V9h14V4" stroke=${k} stroke-width="1.500"/><path d="M.8 15h3v3.500h-3zM15 .5h3v3.500h-3z" stroke=${k} fill="#fff"/>`)],
      [2022.5, 12, caret("#aaa")], [2044, 1, sep],
      [2071, 18, icon(17, 17, svg`<path d="M8.500 0v17M0 8.500h17" stroke="#000" stroke-width="3.400"/>`)],
      [2094, 12, caret("#666")], [2115.5, 1, sep],
      [2139.5, 18, icon(17, 17, svg`<path d="M.5 .5h16v16H.5zM5.500 .5v16M11 .5v16M.5 5.500h16M.5 11h16" stroke=${k} stroke-width="1.300"/>`)],
      [2162.5, 12, caret("#aaa")],
      [2480.5, 18, icon(16, 16, svg`<path d="M1 5V1h4M11 1h4v4M15 11v4h-4M5 15H1v-4" stroke=${k} stroke-width="2"/><path d="M5.500 5.500h5v5h-5z" fill=${k}/>`)],
      [2506, 16, icon(13, 13, svg`<path d="M.7 .7h11.600v11.600H.7z" stroke=${k} stroke-width="1.400"/><path d="M8 1h3.500v11H8z" fill="#999"/>`)],
      [2531, 16, icon(13, 14, svg`<path d="M0 7l6.500-6L13 7M0 13.500l6.500-6L13 13.500" stroke=${k} stroke-width="1.800"/>`)],
    ];
    return html`<div class="tools row">${strip(1279, items)}</div>`;
  }

  private side() {
    return html`<div class="side">
      <div class="finds">
        ${icon(30, 22, svg`<circle cx="15" cy="5" r="15" fill="#f3df6d"/><path d="M7 -8h15v22H7z" fill="#fff"/><path d="M9 2h2M9 6h2M9 10h2" stroke="#5bb" stroke-width="2"/><path d="M13 2h7M13 6h7M13 10h5" stroke="#555" stroke-width="1.200"/>`)}
        ${icon(30, 22, svg`<path d="M9 0v3h12V0M10 4h10l-3 5h-4zM9 18V9h3v9zM18 18V9h3v9zM12 12h6M12 15h6" stroke="#888"/>`)}
        ${icon(30, 22, svg`<path d="M4 0h6v8H4zM1 18h28" stroke="#3f8f4c" stroke-width="3"/><path d="M8 2c-8 3-5 15 4 15h8" stroke="#3f8f4c" stroke-width="4"/><path d="M17 2h9v14h-9z" fill="#e9e2c0" stroke="#777"/><path d="M20 2h4v13h-4z" fill="#f0a830"/><path d="M29 0v18" stroke="#888"/>`)}
        ${icon(30, 32, svg`<path d="M6 0v22M0 7h30M4 30V22h4v8z" stroke="#000" stroke-width="3"/><path d="M0 32l2-7h8l0 7zM13 2h13v20a6 6 0 0 1-11 3l-1-3z" fill="#000"/><path d="M17 2h6v8h-6z" fill="#fff"/>`)}
        ${icon(30, 32, svg`<path d="M15 2L29 29H1z" fill="#dd2a1b" stroke="#b51f14" stroke-width="2" stroke-linejoin="round"/><path d="M15 9L24 26H6z" fill="#f4f4f4"/><path d="M15 13v7" stroke="#111" stroke-width="2.600"/><circle cx="15" cy="23.300" r="1.500" fill="#111"/>`)}
        ${icon(31, 30, svg`<rect y="2" width="31" height="24" rx="3" fill="#111"/><circle cx="15.500" cy="14.500" r="10.500" stroke="#666" stroke-width="1.200"/><path d="M9 19a9 9 0 1 1 13 0" stroke="#999" stroke-width="1.500" stroke-dasharray="1.500 1.500"/><path d="M14 19l5-9" stroke="#ccc" stroke-width="1.500"/><path d="M2 28h25" stroke="#aaa" stroke-dasharray="6 1"/>`)}
      </div>
      <div class="more">${run("More Results", 88)}</div>
      <div class="scratch">${strip(1279, [
        [1287, 11, icon(10, 6, svg`<path d="M0 0h10L5 6z" fill="#888"/>`)],
        [1331.5, 67, run("Scratch...", 67)],
        [1372, 10, html`<span class="q">?</span>`],
        [1390.500, 12, icon(11, 11, svg`<path d="M5.500 0v11M0 5.500h11" stroke="#777" stroke-width="1.400"/>`)],
        [1415, 14, icon(13, 13, svg`<path d="M1 12l1-4 7-7 3 3-7 7z" stroke="#777" stroke-width="1.400"/><path d="M8 2l3 3" stroke="#777" stroke-width="2"/>`)],
        [1440, 12, icon(10, 10, svg`<path d="M0 0l10 10M10 0L0 10" stroke="#777" stroke-width="1.400"/>`)],
      ])}</div>
      <div class="drag">${run("Drag elements", 105)}</div>
      <div class="lines">
        ${icon(36, 8, svg`<path d="M0 4h32" stroke="#111" stroke-width="1.800" stroke-dasharray="6 3 8 3"/><path d="M30 1l5 3-5 3z" fill="#111"/>`)}
        ${icon(35, 8, svg`<path d="M0 4h31" stroke="#444" stroke-width="1.800" stroke-dasharray="4 2 10 3"/><path d="M29 1l5 3-5 3z" fill="#888"/>`)}
        ${icon(33, 8, svg`<path d="M0 4h28" stroke="#111" stroke-width="2"/><path d="M27 0l6 4-6 4z" fill="#111"/><path d="M12 1h7v6h-7z" fill="#999" stroke="#111" stroke-width="2"/>`)}
      </div>
      <div class="sect">${icon(5, 9, svg`<path d="M0 0v9l5-4.500z" fill="#999"/>`)}${run("Misc", 34)}</div>
      <div class="sect tight">${icon(5, 9, svg`<path d="M0 0v9l5-4.500z" fill="#999"/>`)}${run("Advanced", 73)}</div>
      <div class="shapes">${icon(12, 12, svg`<path d="M6 0v12M0 6h12" stroke="#db6a0c" stroke-width="1.800"/>`)}${run("More Shapes...", 112)}</div>
    </div>`;
  }

  private scene() {
    return html`<svg width="745" height="1036" viewBox="1498 220 745 1036" fill="none">
      <rect x="1498" y="220" width="745" height="1036" fill="#fff"/>
      <path d=${gridLines(false)} stroke="#f3f3f3"/><path d=${gridLines(true)} stroke="#d6d6d6"/>
      <path d="M1764.500 220V1256" stroke="#b8b8b8" stroke-width="1.300" stroke-dasharray="4 4"/>
      <path d="M1498 977.500H2243" stroke="#b8b8b8" stroke-width="1.200" stroke-dasharray="4 3"/>
      ${flowEdges.map(([, x1, y1, x2, y2]) => svg`
        <path d="M${x1} ${y1}L${x2} ${y2}" stroke="#111" stroke-width="1.200"/>
        <path d=${arrowHead(x1, y1, x2, y2, 10, 4.6, 7.5)} fill="#000"/>`)}
      ${shapes.map(([kind, x, y, fill, lines]) => svg`
        ${kind === "circle"
          ? svg`<circle cx=${x} cy=${y} r="42.600" fill=${fill} stroke="#111" stroke-width="1.200"/>`
          : svg`<path d="M${x} ${y - 42.5}L${x + 63.8} ${y}L${x} ${y + 42.5}L${x - 63.8} ${y}Z" fill=${fill} stroke="#111" stroke-width="1.200"/>`}
        ${lines.map((t, i) => svg`<text x=${x - 0.4} y=${y + 4 + (i - (lines.length - 1) / 2) * 15.3} font-size=${kind === "circle" ? 12.75 : 15} font-weight=${kind === "circle" ? "400" : "700"}>${t}</text>`)}`)}
      ${flowEdges.map(([n, , , , , x, y]) => svg`
        <rect x=${x - n.length * 4.3} y=${y - 8.5} width=${n.length * 8.6} height="17" fill="#fff"/>
        <text x=${x} y=${y + 5.2} font-size="15" font-weight="700">${n}</text>`)}
    </svg>`;
  }

  private check(label: string, w: number, on: boolean, extra: unknown = nothing) {
    return html`<div class="opt"><span class="box ${on ? "on" : ""}">${on ? icon(11, 9, svg`<path d="M1 4.500l3.200 3.300L10 1.200" stroke="#fff" stroke-width="2.300"/>`) : nothing}</span>${run(label, w)}${extra}</div>`;
  }

  private format() {
    return html`<div class="fmt">
      <div class="ftabs">
        <span class="ftab" style="width:133px;padding-top:13px">${run("Diagram", 65)}</span>
        <span class="ftab off" style="width:134px;padding-top:11px">${run("Style", 38)}</span>
        <span class="ftab off" style="width:34px;padding-bottom:2px">${icon(9, 9, svg`<path d="M0 0l9 9M9 0L0 9" stroke="#b4c6d8" stroke-width="2.500"/>`)}</span>
      </div>
      <div class="blk" style="height:191px;padding-top:23px">
        <div class="ttl">${run("View", 34)}</div>
        ${this.check("Grid", 28, true, html`<span class="right" style="padding-right:20px"><span class="num">${run("10 pt", 33)}</span><span class="spin">${icon(10, 19, svg`<path d="M0 6l5-4.500L10 6zM0 13l5 4.500L10 13z" fill="#aaa" stroke="#777"/><path d="M-2 9.500h14" stroke="#aaa"/>`)}</span><span class="swatch"><i></i></span></span>`)}
        ${this.check("Page View", 68, true)}
        ${this.check("Background", 79, false, html`<span class="right" style="padding-right:82px"><span class="change">${run("Change", 53)}</span></span>`)}
        ${this.check("Shadow", 53, false)}
      </div>
      <div class="blk" style="height:179px;padding-top:11px">
        <div class="ttl">${run("Options", 56)}</div>
        ${this.check("Connection Arrows", 126, true)}${this.check("Connection Points", 120, true)}
        ${this.check("Guides", 46, true)}${this.check("Autosave", 61, true)}
      </div>
      <div class="blk" style="height:120px;padding-top:11px">
        <div class="ttl">${run("Paper Size", 72)}</div>
        <div class="select">${run("A4 (210 mm x 297 mm)", 157)}${icon(11, 7, svg`<path d="M.5 .8l5 5 5-5" stroke="#111" stroke-width="2"/>`)}</div>
        <div class="row" style="height:49px;padding-left:11px"><span class="radio"></span><span style="width:9px"></span>${run("Portrait", 49)}<span style="width:12px"></span><span class="radio on"><i></i></span><span style="width:9px"></span>${run("Landscape", 70)}</div>
      </div>
      <div class="blk" style="height:84px;padding-top:15px"><div class="wide">${run("Edit Data...", 74)}</div><div class="wide">${run("Clear Default Style", 126)}</div></div>
    </div>`;
  }

  render() {
    return html`
      ${this.tabs()}${this.nav()}
      <div class="head">
        <span class="logo">${icon(40, 45, svg`
          <rect width="40" height="45" rx="2.500" fill="#f09228"/>
          <path d="M25 8L40 25V45H14L6 34L20 18Z" fill="#e07f2c"/>
          <path d="M19 16L11 28M21 16L29 28" stroke="#fff" stroke-width="2"/>
          <rect x="14.500" y="7" width="11.500" height="10" rx="1.800" fill="#fff"/><rect x="5.500" y="25" width="11.500" height="10" rx="1.800" fill="#fff"/><rect x="23.500" y="25" width="11.500" height="10" rx="1.800" fill="#fff"/>`)}</span>
        <div class="names">
          <div class="doc">${run("UseSmthAtHome.drawio", 243)}</div>
          <div class="menus">${run("File", 26)}${run("Edit", 29)}${run("View", 36)}${run("Arrange", 62)}${run("Extras", 45)}${run("Help", 35)}<span class="saved">${run("All changes saved", 117)}</span></div>
        </div>
        <div class="share">${icon(18, 18, svg`<ellipse cx="9" cy="4.500" rx="4" ry="4.500" fill="#000"/><path d="M0 18v-3q1-3 6-4V8h6v3q5 1 6 4v3z" fill="#000"/>`)}${run("Share", 43)}</div>
        <div class="world">${icon(20, 20, svg`<circle cx="10" cy="10" r="9" stroke="#999" stroke-width="1.800"/><ellipse cx="10" cy="10" rx="4.500" ry="9" stroke="#999" stroke-width="1.500"/><path d="M1 6.500h18M1 13.500h18M10 1v18" stroke="#999" stroke-width="1.500"/>`)}</div>
      </div>
      ${this.tools()}
      <div class="work">
        ${this.side()}
        <div class="stage">
          <div class="scene">${this.scene()}<div class="vtrack"><i></i></div></div>
          <div class="htrack"><i></i></div>
          <div class="pages">${strip(1498, [
            [1516, 4, icon(3, 16, svg`<path d="M1.500 0v3M1.500 6.500v3M1.500 13v3" stroke="#888" stroke-width="2.500"/>`)],
            [1619.5, 171, html`<span class="page">${run("Page-1", 53)}</span>`],
            [1724, 17, icon(16, 16, svg`<path d="M8 0v16M0 8h16" stroke="#909396" stroke-width="2.600"/>`)],
            [1742, 1, html`<i style="width:1px;height:48px;background:#e4e6e8"></i>`],
          ])}</div>
        </div>
        ${this.format()}
      </div>
      <div class="dl row">${strip(1279, [
        [1315.5, 21, icon(20, 19, svg`<path d="M0 0h20v6H0z" fill="#b3274e"/><path d="M0 6h20v6H0z" fill="#3c55b8"/><path d="M0 12h20v7H0z" fill="#2f8a3e"/><path d="M7 0h6v19H7z" fill="#d9a13c"/><path d="M8 7h4v6H8z" fill="#fff" stroke="#7a4a10"/>`)],
        [1426, 170, run("omo-smart-home-....zip", 170)],
        [1546, 11, icon(11, 7, svg`<path d="M.5 6.500l5-5.500 5 5.500" stroke="#b4c8cb" stroke-width="1.500"/>`)],
        [1576, 1, html`<i style="width:1px;height:56px;background:#2f7d8a"></i>`],
        [2453, 124, html`<span class="all">${run("Zobrazit vše", 84)}</span>`],
        [2537.500, 12, icon(10, 10, svg`<path d="M0 0l10 10M10 0L0 10" stroke="#b4c8cb" stroke-width="1.500"/>`)],
      ])}</div>`;
  }
}

@customElement("task-bar")
export class TaskBar extends LitElement {
  static styles = [base, css`
    :host { height: 50px; width: 2560px; background: linear-gradient(90deg, #343434, #262626 400px, #202020 1000px, #1f1f1f); color: #fff; font: 14.5px "Open Sans", sans-serif; overflow: hidden; }
    .stop { display: flex; align-items: center; justify-content: center; flex: none; height: 50px; }
    .app { width: 51px; height: 50px; display: flex; flex-direction: column; align-items: center; }
    .pic { height: 47px; padding-top: 3px; display: flex; align-items: center; }
    .mark { height: 3px; width: 51px; background: #e5628f; }
    .mark.two { background: linear-gradient(90deg, #e5628f 41px, #a84c6e 41px); }
    .clock { display: flex; flex-direction: column; align-items: center; gap: 3px; }
  `];
  render() {
    const app = (pic: unknown, mark = "") => html`<span class="app"><span class="pic">${pic}</span>${mark ? html`<i class="mark ${mark}"></i>` : nothing}</span>`;
    return html`<div class="row">${strip(0, [
      [30, 22, icon(20, 20, svg`<path d="M0 3l8.500-1.200v7.700H0zM9.500 1.600L20 0v9.500H9.500zM0 10.500h8.500v7.700L0 17zM9.500 10.500H20V20L9.500 18.400z" fill="#fff"/>`)],
      [91, 22, icon(20, 20, svg`<circle cx="12" cy="7.500" r="6.700" stroke="#fff" stroke-width="1.500"/><path d="M7.500 12.500L1 19.500" stroke="#fff" stroke-width="1.500"/>`)],
      [153.500, 51, app(icon(30, 28, svg`<path d="M27 0l3 2-4 9-3-2z" fill="#c98b4e"/><path d="M14 5c8 0 12 4 12 10 0 8-6 12-13 12-3 0-1-4-4-5-4-1-8 0-8-6C1 9 7 5 14 5z" fill="#b9dcf0" stroke="#7fb0d0"/><circle cx="7" cy="15" r="2.500" fill="#d33"/><circle cx="11" cy="10" r="2.500" fill="#e8a020"/><circle cx="18" cy="10" r="2.500" fill="#4a4"/><circle cx="15" cy="20" r="3" fill="#26384a"/><path d="M24 9l-6 11" stroke="#7a8fa0" stroke-width="2.500"/>`))],
      [216, 51, app(icon(28, 28, svg`<circle cx="14" cy="14" r="14" fill="#fbc116"/><path d="M14 14L1.900 7A14 14 0 0 1 26.100 7H14z" fill="#e33b2e"/><path d="M14 14L1.900 7A14 14 0 0 0 14 28l6-10.500z" fill="#30a04e"/><path d="M26.100 7H14v14L14 28A14 14 0 0 0 26.100 7z" fill="#fbc116"/><circle cx="14" cy="14" r="6.800" fill="#fff"/><circle cx="14" cy="14" r="5.300" fill="#3c7ff0"/>`), "two")],
      [278, 51, app(icon(28, 24, svg`<path d="M0 1h11l2 3h15v19H0z" fill="#f2b91c"/><path d="M0 7h28v16H0z" fill="#ffda6b"/><path d="M5 24v-9q0-2 2-2h14q2 0 2 2v9h-5v-5h-8v5z" fill="#2f8bd0"/>`))],
      [340, 51, app(icon(29, 27, svg`<path d="M7 0h22v27H7z" fill="#2b7cd3"/><path d="M7 0h22v7H7z" fill="#41a5ee"/><path d="M7 14h22v6H7z" fill="#185abd"/><path d="M7 20h22v7H7z" fill="#103f91"/><rect y="6" width="15" height="15" rx="1" fill="#185abd"/><path d="M3 9.500l2 8 2.500-7 2.500 7 2-8" stroke="#fff" stroke-width="1.600"/>`), "one")],
      [402, 51, app(icon(28, 28, svg`<path d="M0 5L8 0l6 6 7-6 7 7-2 14-8 7-14-2z" fill="#1e88f7"/><path d="M0 8L7 0l6 7-6 19z" fill="#fb8a1d"/><path d="M4 20l8 8 8-2-6-10z" fill="#f0309a"/><path d="M5 5h18v18H5z" fill="#000"/><path d="M8 8h4M10 8v6M8 14h4M15 8h4M18 8v4.500q0 1.800-3 1.500M8 20h6" stroke="#fff" stroke-width="1.500"/>`), "one")],
      [464, 51, app(icon(27, 27, svg`<rect width="27" height="27" rx="5" fill="#b30b00"/><path d="M6 20c3-1 8-6 8-13 0-2-2-2-1.500 0C13 12 17 17 21 17c2 0 1-2-1-2-5 0-10 2-13 4-2 1.500-2 2-1 1z" stroke="#fff" stroke-width="1.500"/>`), "two")],
      [526, 51, app(fish(28), "one")],
      [2258, 14, icon(15, 8, svg`<path d="M1 7.500l6.500-6.500L14 7.500" stroke="#fff" stroke-width="1.400"/>`)],
      [2288, 22, icon(20, 14, svg`<path d="M5 2h13v11H5z" stroke="#fff" stroke-width="1.500"/><path d="M8 4.500h8v6H8z" fill="#fff"/><path d="M19.500 5v5M1 0v3M5 0v3M0 3h6v3H3v5h3" stroke="#fff" stroke-width="1.500"/>`)],
      [2319, 18, icon(16, 16, svg`<path d="M1 15A14 14 0 0 1 15 1M5 15A10 10 0 0 1 15 5.500M9 15a6 6 0 0 1 6-5.500" stroke="#ddd" stroke-width="1.300"/><circle cx="14" cy="14" r="1.700" fill="#fff"/>`)],
      [2347, 20, icon(19, 16, svg`<path d="M1 5.500h3L8.500 1v14L4 10.500H1z" stroke="#fff" stroke-width="1.300"/><path d="M11 5.500q2 2.500 0 5M13.500 3.500q3.500 4.500 0 9M16 1.500q5 6.500 0 13" stroke="#ddd" stroke-width="1.200"/>`)],
      [2385.500, 30, run("ENG", 29)],
      [2450.500, 72, html`<span class="clock">${run("20:25", 35)}${run("09.05.2022", 70)}</span>`],
      [2519, 22, icon(20, 20, svg`<path d="M1 1h18v15h-7l-2.500 3-2.500-3H1z" stroke="#fff" stroke-width="1.400"/>`)],
      [2555, 1, html`<i style="width:1px;height:50px;background:#5a5a5a"></i>`],
    ])}</div>`;
  }
}

@customElement("app-root")
export class AppRoot extends LitElement {
  static styles = css`
    :host { display: flex; flex-direction: column; width: 2560px; height: 1440px; overflow: hidden; background: #1f1f1f; }
    .desktop { position: relative; height: 1390px; flex: none; }
    .browser { position: absolute; left: 1279px; top: 0; }
    .modeler { position: absolute; left: 0; top: 0; }
    .dialog { position: absolute; left: 961px; top: 449px; }
  `;
  render() {
    return html`<div class="desktop">
        <drawio-window class="browser"></drawio-window>
        <pct-window class="modeler"></pct-window>
        <situations-dialog class="dialog"></situations-dialog>
      </div>
      <task-bar></task-bar>`;
  }
}
